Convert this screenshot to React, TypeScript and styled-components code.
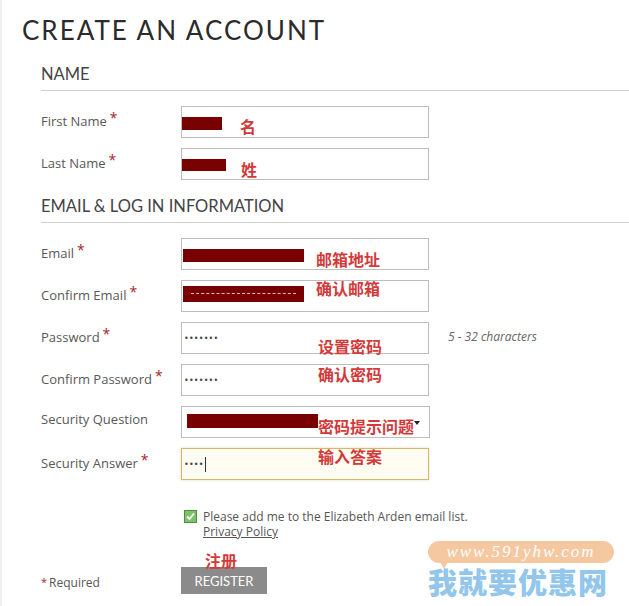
import React from "react";
import styled, { createGlobalStyle } from "styled-components";

const GlobalStyle = createGlobalStyle`
  html, body {
    margin: 0;
    padding: 0;
    background: #fff;
  }
  body {
    font-family: "Open Sans", "Liberation Sans", sans-serif;
    color: #555;
  }
`;

const nameRows = [
  { label: "First Name", bar: { x: 0, y: 10, w: 40, h: 13 }, note: { text: "名", x: 58, y: 10 } },
  { label: "Last Name", bar: { x: 0, y: 10, w: 44, h: 12 }, note: { text: "姓", x: 59, y: 11 } },
];

const App = () => {
  return (
    <Page>
      <GlobalStyle />
      <Title>CREATE AN ACCOUNT</Title>

      <Section>
        <SectionHeading>NAME</SectionHeading>
        <FormGrid>
          {nameRows.map((r) => (
            <React.Fragment key={r.label}>
              <Label>
                {r.label}
                <Star>*</Star>
              </Label>
              <Field>
                <Redact $x={r.bar.x} $y={r.bar.y} $w={r.bar.w} $h={r.bar.h} />
                <Note $x={r.note.x} $y={r.note.y}>
                  {r.note.text}
                </Note>
              </Field>
              <span />
            </React.Fragment>
          ))}
        </FormGrid>
      </Section>

      <Section>
        <SectionHeading>EMAIL &amp; LOG IN INFORMATION</SectionHeading>
        <FormGrid>
          <Label>
            Email<Star>*</Star>
          </Label>
          <Field>
            <Redact $x={1} $y={10} $w={121} $h={13} />
            <Note $x={134} $y={11}>邮箱地址</Note>
          </Field>
          <span />

          <Label>
            Confirm Email<Star>*</Star>
          </Label>
          <Field>
            <Redact $x={1} $y={5} $w={121} $h={16} $dashed />
            <Note $x={134} $y={-2}>确认邮箱</Note>
          </Field>
          <span />

          <Label>
            Password<Star>*</Star>
          </Label>
          <Field>
            <Dots>•••••••</Dots>
            <Note $x={136} $y={14}>设置密码</Note>
          </Field>
          <Hint>5 - 32 characters</Hint>

          <Label>
            Confirm Password<Star>*</Star>
          </Label>
          <Field>
            <Dots>•••••••</Dots>
            <Note $x={136} $y={0}>确认密码</Note>
          </Field>
          <span />

          <Label>Security Question</Label>
          <Field $wide>
            <Redact $x={5} $y={7} $w={131} $h={14} />
            <Note $x={136} $y={10}>密码提示问题</Note>
            <Caret />
          </Field>
          <span />

          <Label>
            Security Answer<Star>*</Star>
          </Label>
          <Field $focused>
            <Dots>••••</Dots>
            <Cursor />
            <Note $x={136} $y={-2}>输入答案</Note>
          </Field>
          <span />
        </FormGrid>

        <OptIn>
          <CheckBox>
            <svg width="13" height="13" viewBox="0 0 13 13">
              <rect x="0.5" y="0.5" width="12" height="12" fill="#7cc46a" stroke="#4f8f42" />
              <path d="M3 6.5 L5.5 9 L10 3.5" fill="none" stroke="#fff" strokeWidth="1.8" />
            </svg>
          </CheckBox>
          <OptText>
            <div>Please add me to the Elizabeth Arden email list.</div>
            <PolicyLink>Privacy Policy</PolicyLink>
          </OptText>
        </OptIn>

        <Footer>
          <Required>
            <ReqStar>*</ReqStar>Required
          </Required>
          <ButtonWrap>
            <ButtonNote>注册</ButtonNote>
            <RegisterButton>REGISTER</RegisterButton>
          </ButtonWrap>
        </Footer>
      </Section>

      <Watermark>
        <Bubble>www.591yhw.com</Bubble>
        <BrandText>我就要优惠网</BrandText>
      </Watermark>
    </Page>
  );
};

export default App;

const Page = styled.div`
  position: relative;
  width: 629px;
  height: 606px;
  box-sizing: border-box;
  padding: 15px 0 0 22px;
  box-shadow: inset 2px 0 0 #efefef;
  overflow: hidden;
`;

const Title = styled.h1`
  margin: 0;
  font-family: Lato, "Liberation Sans", sans-serif;
  font-weight: 400;
  font-size: 26px;
  line-height: 30px;
  letter-spacing: 2px;
  color: #2b2b2b;
`;

const Section = styled.div`
  margin-left: 19px;
`;

const SectionHeading = styled.h2`
  margin: 16px 0 0;
  padding-bottom: 6px;
  border-bottom: 1px solid #cfcfcf;
  font-family: Lato, "Liberation Sans", sans-serif;
  font-weight: 400;
  font-size: 16.5px;
  line-height: 20px;
  color: #444;
  ${Section}:first-of-type & {
    margin-top: 19px;
  }
`;

const FormGrid = styled.div`
  display: grid;
  grid-template-columns: 140px 248px auto;
  grid-auto-rows: 32px;
  row-gap: 10px;
  align-items: center;
  margin-top: 15px;
`;

const Label = styled.div`
  font-size: 13px;
  color: #585858;
  white-space: nowrap;
  margin-bottom: 6px;
`;

const Star = styled.span`
  color: #a8262b;
  font-size: 14px;
  margin-left: 3px;
  vertical-align: 3px;
`;

const Field = styled.div<{ $wide?: boolean; $focused?: boolean }>`
  position: relative;
  height: 32px;
  width: ${(p) => (p.$wide ? "249px" : "248px")};
  box-sizing: border-box;
  display: flex;
  align-items: center;
  padding-left: 2px;
  border: 1px solid ${(p) => (p.$focused ? "#d9b56a" : "#bdbdbd")};
  background: ${(p) => (p.$focused ? "#fffcf2" : "#fff")};
  box-shadow: ${(p) => (p.$focused ? "0 0 2px rgba(217,181,106,0.6)" : "none")};
`;

const Redact = styled.div<{ $x: number; $y: number; $w: number; $h: number; $dashed?: boolean }>`
  position: absolute;
  left: ${(p) => p.$x}px;
  top: ${(p) => p.$y}px;
  width: ${(p) => p.$w}px;
  height: ${(p) => p.$h}px;
  background: #780000;
  &::after {
    content: "";
    display: ${(p) => (p.$dashed ? "block" : "none")};
    position: absolute;
    left: 8px;
    right: 8px;
    top: 7px;
    border-top: 1px dashed rgba(255, 255, 255, 0.75);
  }
`;

const Note = styled.span<{ $x: number; $y: number }>`
  position: absolute;
  left: ${(p) => p.$x}px;
  top: ${(p) => p.$y}px;
  font-family: "Noto Sans CJK SC", sans-serif;
  font-weight: 700;
  font-size: 16px;
  line-height: 18px;
  color: #d23a3a;
  white-space: nowrap;
`;

const Dots = styled.span`
  font-family: "DejaVu Sans", sans-serif;
  font-size: 8px;
  letter-spacing: 0.2px;
  color: #444;
`;

const Cursor = styled.span`
  display: inline-block;
  width: 1px;
  height: 15px;
  margin-left: 1px;
  background: #333;
`;

const Caret = styled.span`
  position: absolute;
  right: 9px;
  top: 14px;
  width: 0;
  height: 0;
  border-left: 3px solid transparent;
  border-right: 3px solid transparent;
  border-top: 4px solid #222;
`;

const Hint = styled.div`
  margin-left: 19px;
  margin-bottom: 3px;
  font-size: 12px;
  font-style: italic;
  color: #666;
`;

const OptIn = styled.div`
  display: flex;
  align-items: flex-start;
  gap: 6px;
  margin: 29px 0 0 143px;
`;

const CheckBox = styled.span`
  display: flex;
  margin-top: 1px;
`;

const OptText = styled.div`
  font-size: 12px;
  line-height: 15px;
  color: #555;
`;

const PolicyLink = styled.div`
  text-decoration: underline;
  color: #555;
`;

const Footer = styled.div`
  display: grid;
  grid-template-columns: 140px auto;
  align-items: center;
  margin-top: 28px;
`;

const Required = styled.div`
  font-size: 12px;
  color: #555;
  padding-top: 3px;
`;

const ReqStar = styled.span`
  color: #a8262b;
  font-size: 11px;
  margin-right: 2px;
  vertical-align: 1px;
`;

const ButtonWrap = styled.div`
  position: relative;
  width: 86px;
`;

const ButtonNote = styled.span`
  position: absolute;
  left: 24px;
  top: -16px;
  font-family: "Noto Sans CJK SC", sans-serif;
  font-weight: 700;
  font-size: 16px;
  line-height: 18px;
  color: #d23a3a;
`;

const RegisterButton = styled.button`
  display: block;
  width: 86px;
  height: 27px;
  border: none;
  background: #8b8b8b;
  color: #fff;
  font-family: Lato, "Liberation Sans", sans-serif;
  font-size: 13px;
  padding: 0;
`;

const Watermark = styled.div`
  position: absolute;
  left: 428px;
  top: 541px;
  width: 186px;
`;

const Bubble = styled.div`
  position: relative;
  height: 22px;
  border-radius: 11px;
  background: #f6c8a2;
  color: #fff;
  font-family: "Liberation Serif", serif;
  font-style: italic;
  font-size: 17px;
  line-height: 22px;
  letter-spacing: 2px;
  text-align: center;
  &::after {
    content: "";
    position: absolute;
    left: 12px;
    bottom: -6px;
    border-left: 4px solid transparent;
    border-right: 4px solid transparent;
    border-top: 7px solid #f6c8a2;
  }
`;

const BrandText = styled.div`
  margin-top: 1px;
  font-family: "Noto Sans CJK SC", sans-serif;
  font-weight: 900;
  font-size: 29px;
  line-height: 34px;
  letter-spacing: 1px;
  color: #92c6ea;
  white-space: nowrap;
`;
